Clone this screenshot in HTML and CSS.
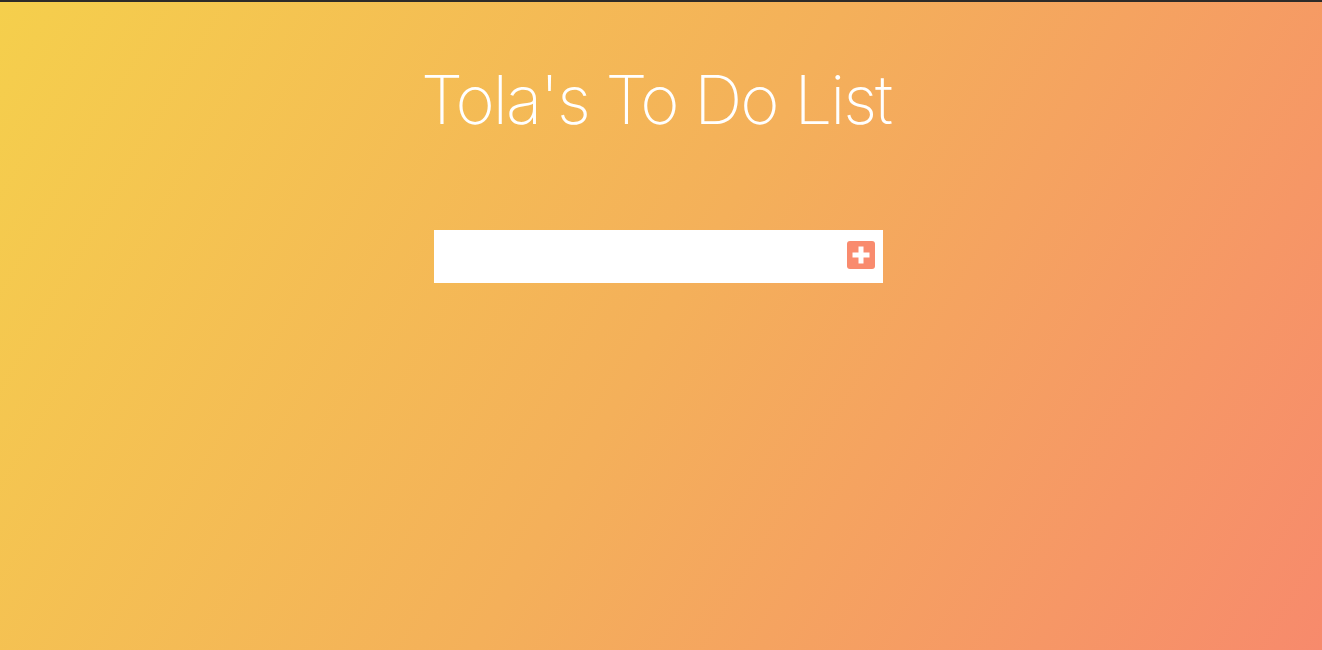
FILE: index.html
```html
<!DOCTYPE html>
<html lang="en">
<head>
<meta charset="utf-8">
<title>Tola's To Do List</title>
<link rel="stylesheet" href="styles.css">
</head>
<body>
<main class="page">
  <h1 class="title">Tola's To Do List</h1>
  <form class="todo-form">
    <input class="todo-input" type="text" aria-label="New task">
    <button class="add-btn" type="button" aria-label="Add">
      <svg width="28" height="28" viewBox="0 0 28 28"><rect width="28" height="28" rx="3" fill="#f98b6e"/><rect x="5.5" y="11.5" width="17" height="5" fill="#fff"/><rect x="11.5" y="5.5" width="5" height="17" fill="#fff"/></svg>
    </button>
  </form>
</main>
</body>
</html>
```
FILE: styles.css
```css
html, body {
  margin: 0;
  height: 100%;
}
body {
  border-top: 2px solid #2d2b29;
  box-sizing: border-box;
  background: linear-gradient(120deg, #f5cf4c 0%, #f4b05a 50%, #f78a6c 100%);
  font-family: Inter, "Noto Sans", sans-serif;
  color: #fff;
}
.page {
  display: flex;
  flex-direction: column;
  align-items: center;
  padding-top: 50px;
}
.title {
  margin: 0 10px 0 0;
  font-weight: 200;
  font-size: 67px;
  line-height: 96px;
  letter-spacing: -2px;
}
.todo-form {
  margin-top: 82px;
  margin-right: 5px;
  width: 449px;
  height: 53px;
  background: #fff;
  display: flex;
  align-items: center;
  box-sizing: border-box;
  padding: 0 8px 0 10px;
}
.todo-input {
  flex: 1;
  border: none;
  outline: none;
  background: transparent;
  font-family: inherit;
  font-size: 16px;
  height: 100%;
  padding: 0;
}
.add-btn {
  border: none;
  background: none;
  padding: 0;
  margin-bottom: 3px;
  width: 28px;
  height: 28px;
  display: block;
  cursor: pointer;
}
.add-btn svg { display: block; }
```
